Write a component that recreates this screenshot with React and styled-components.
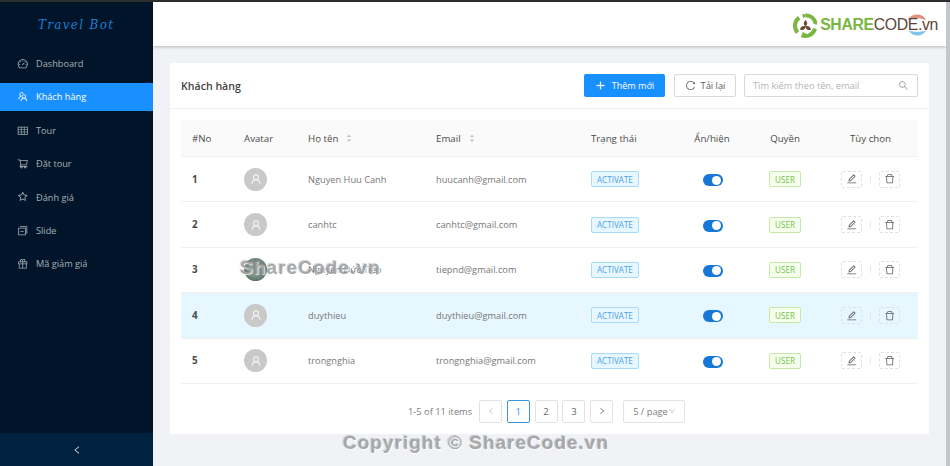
import React from "react";
import styled, { createGlobalStyle } from "styled-components";
import {
  AiOutlineDashboard, AiOutlineTeam, AiOutlineTable, AiOutlineShoppingCart, AiOutlineStar,
  AiOutlineSwitcher, AiOutlineGift, AiOutlinePlus, AiOutlineReload, AiOutlineSearch,
  AiOutlineEdit, AiOutlineDelete, AiOutlineLeft, AiOutlineRight, AiOutlineDown, AiOutlineUser,
  AiFillCaretUp, AiFillCaretDown,
} from "react-icons/ai";

const Global = createGlobalStyle`
  html, body { margin: 0; padding: 0; height: 100%; overflow: hidden; background: #f0f2f5; }
  body { font-family: "Open Sans", "Noto Sans", "Liberation Sans", sans-serif; font-size: 9.3px; color: #595959; }
  * { box-sizing: border-box; }
`;

const Shell = styled.div`
  position: relative;
  width: 950px;
  height: 466px;
  display: flex;
  flex-direction: column;
  overflow: hidden;
`;
const TopStrip = styled.div`height: 2px; background: #2e2e2e; flex: none;`;
const Body = styled.div`flex: 1; display: flex; min-height: 0;`;
const Sider = styled.aside`
  width: 153px;
  flex: none;
  background: #001529;
  display: flex;
  flex-direction: column;
`;
const Brand = styled.div`
  height: 45px;
  padding: 16px 0 0 38px;
  font-family: "DejaVu Serif", serif;
  font-style: italic;
  font-size: 12px;
  letter-spacing: 1.3px;
  color: #1f7fd1;
`;
const Menu = styled.nav`flex: 1; display: flex; flex-direction: column; padding-top: 2.5px;`;
const MenuItem = styled.div`
  height: 28px;
  margin-bottom: 5.4px;
  padding-left: 16.5px;
  display: flex;
  align-items: center;
  gap: 8px;
  font-size: 9.2px;
  color: ${p => (p.$active ? "#fff" : "rgba(255,255,255,.66)")};
  background: ${p => (p.$active ? "#1890ff" : "transparent")};
  svg { width: 11.5px; height: 11.5px; flex: none; }
`;
const Collapse = styled.div`
  height: 33px;
  background: #002140;
  color: #d5dbe1;
  display: flex;
  align-items: center;
  justify-content: center;
  svg { width: 10px; height: 10px; }
`;
const Main = styled.main`flex: 1; display: flex; flex-direction: column; min-width: 0; padding-right: 4px; position: relative;`;
const ScrollTrack = styled.div`width: 4px; background: #c4c6c9; position: absolute; right: 0; top: 0; bottom: 0;`;
const Header = styled.header`
  height: 44px;
  background: #fff;
  box-shadow: 0 1px 3px rgba(0,0,0,.25);
  display: flex;
  justify-content: flex-end;
  align-items: center;
  padding-right: 8px;
  flex: none;
`;
const Logo = styled.div`display: flex; align-items: center; gap: 1px; margin-top: 2px;`;
const LogoText = styled.div`
  font-family: "Liberation Sans", sans-serif;
  font-size: 15.8px;
  line-height: 20px;
  color: #5b4636;
  position: relative;
  letter-spacing: -.35px;
  b { color: #7ab642; font-weight: 700; }
`;
const LogoSplash = styled.svg`position: absolute; right: 9px; top: -4px; z-index: 0;`;
const LogoWord = styled.span`position: relative; z-index: 1;`;

const Card = styled.section`
  margin: 17px 17px 0 17px;
  height: 371px;
  background: #fff;
  display: flex;
  flex-direction: column;
`;
const CardHead = styled.div`
  height: 46px;
  padding: 0 11px;
  border-bottom: 1px solid #f0f0f0;
  display: flex;
  align-items: center;
`;
const CardTitle = styled.h2`
  margin: 0;
  flex: 1;
  font-size: 10.6px;
  font-weight: 600;
  color: #434343;
`;
const PrimaryBtn = styled.button`
  width: 81px; height: 23px;
  border: 0; border-radius: 2px;
  background: #1890ff;
  color: #fff;
  font: inherit; font-size: 9.1px;
  display: flex; align-items: center; justify-content: center; gap: 6px;
  padding: 0;
  svg { width: 11px; height: 11px; stroke: #fff; stroke-width: 30; }
`;
const GhostBtn = styled.button`
  width: 62px; height: 23px; margin-left: 9px;
  border: 1px solid #d9d9d9; border-radius: 2px;
  background: #fff;
  color: #595959;
  font: inherit; font-size: 9.3px;
  display: flex; align-items: center; justify-content: center; gap: 5px;
  padding: 0;
  svg { width: 11px; height: 11px; }
`;
const Search = styled.div`
  width: 174px; height: 23px; margin-left: 8px;
  border: 1px solid #d9d9d9; border-radius: 2px;
  display: flex; align-items: center; justify-content: space-between;
  padding: 0 8px;
  color: #b5b5b5; font-size: 9.25px;
  svg { width: 11px; height: 11px; color: #9a9a9a; }
`;
const TableWrap = styled.div`padding: 11px 11px 0;`;
const cols = "52px 64px 128px 155px 97px 70px 76px 95px";
const HeadRow = styled.div`
  display: grid;
  grid-template-columns: ${cols};
  height: 37px;
  background: #fafafa;
  border-bottom: 1px solid #f0f0f0;
  align-items: center;
  font-size: 9.7px;
  font-weight: 500;
  color: #4a4a4a;
`;
const Row = styled.div`
  display: grid;
  grid-template-columns: ${cols};
  height: 45.4px;
  align-items: center;
  border-bottom: 1px solid #f0f0f0;
  background: ${p => (p.$hl ? "#e6f7ff" : "#fff")};
  font-size: 9.25px;
  color: #777;
`;
const Cell = styled.div`
  padding: 0 11px;
  display: flex;
  align-items: center;
  gap: 7px;
  white-space: nowrap;
  justify-content: ${p => (p.$center ? "center" : "flex-start")};
`;
const NoCell = styled(Cell)`font-weight: 700; color: #4a4a4a; font-size: 9.8px;`;
const Sorter = styled.span`
  display: inline-flex; flex-direction: column; color: #bfbfbf;
  svg { width: 8px; height: 5.5px; display: block; }
`;
const Avatar = styled.div`
  width: 23px; height: 23px; border-radius: 50%;
  background: ${p => (p.$photo ? "radial-gradient(circle at 50% 45%, #8d9a90 0 35%, #5c7a6c 70%)" : "#c9c9c9")};
  color: #fff;
  display: flex; align-items: center; justify-content: center;
  svg { width: 12px; height: 12px; }
`;
const Tag = styled.span`
  height: 16px; padding: 0 5px;
  display: inline-flex; align-items: center;
  border: 1px solid ${p => p.$border};
  background: ${p => p.$bg};
  color: ${p => p.$color};
  border-radius: 2px;
  font-size: 8.1px;
`;
const Switch = styled.span`
  width: 20px; height: 12px; border-radius: 6px; background: #1677d9; margin: 2px 0 0 1px;
  display: inline-flex; align-items: center; justify-content: flex-end; padding-right: 1.5px;
  &::after { content: ""; width: 9px; height: 9px; border-radius: 50%; background: #fff; }
`;
const IconBtn = styled.span`
  width: 21px; height: 17px;
  border: 1px dashed #e0e0e0; border-radius: 2px;
  display: inline-flex; align-items: center; justify-content: center;
  color: #5f5f5f;
  svg { width: 11.5px; height: 11.5px; }
`;
const Divider = styled.span`width: 1px; height: 7px; background: #e6e6e6; margin: 0 8px;`;
const Actions = styled(Cell)`gap: 0; padding: 0 0 0 18px;`;
const Pager = styled.div`
  display: flex; align-items: center;
  margin-top: 16px;
  padding-left: 238px;
  font-size: 9.3px; color: #7d7d7d;
`;
const Total = styled.span`width: 71px; flex: none;`;
const PageBtn = styled.span`
  width: 23px; height: 23px; margin-right: 4.8px;
  border: 1px solid ${p => (p.$active ? "#3e95d8" : "#e2e2e2")};
  border-radius: 2px;
  color: ${p => (p.$active ? "#3e95d8" : p.$off ? "#c4c4c4" : "#666")};
  display: inline-flex; align-items: center; justify-content: center;
  font-size: 9.6px;
  svg { width: 8px; height: 8px; }
`;
const PageSize = styled.span`
  width: 62px; height: 23px; margin-left: 5.5px;
  border: 1px solid #e2e2e2; border-radius: 2px;
  display: inline-flex; align-items: center; justify-content: center; gap: 0;
  svg { width: 8px; height: 8px; color: #bdbdbd; }
`;
const Watermark = styled.div`
  position: absolute;
  font-family: "Liberation Sans", sans-serif;
  font-weight: 700;
  color: rgba(150,150,150,.78);
  text-shadow: 1px 1px 1px rgba(255,255,255,.8), -1px -1px 1px rgba(90,90,90,.3);
  white-space: nowrap;
  letter-spacing: ${p => p.$ls}px;
  left: ${p => p.$x}px;
  top: ${p => p.$y}px;
  font-size: ${p => p.$s}px;
`;

const items = [
  [AiOutlineDashboard, "Dashboard"], [AiOutlineTeam, "Khách hàng", true], [AiOutlineTable, "Tour"],
  [AiOutlineShoppingCart, "Đặt tour"], [AiOutlineStar, "Đánh giá"], [AiOutlineSwitcher, "Slide"], [AiOutlineGift, "Mã giảm giá"],
];
const rows = [
  ["1", "Nguyen Huu Canh", "huucanh@gmail.com"],
  ["2", "canhtc", "canhtc@gmail.com"],
  ["3", "Nguyễn Đức Tiệp", "tiepnd@gmail.com", "photo"],
  ["4", "duythieu", "duythieu@gmail.com", "hl"],
  ["5", "trongnghia", "trongnghia@gmail.com"],
];

const Sort = () => <Sorter><AiFillCaretUp /><AiFillCaretDown /></Sorter>;

const LogoMark = () => (
  <svg width="27" height="27" viewBox="0 0 34 34">
    <path d="M17 4a13 13 0 0 1 12.6 10" fill="none" stroke="#7ab642" strokeWidth="5" />
    <path d="M29 21a13 13 0 0 1-17 8.5" fill="none" stroke="#7ab642" strokeWidth="5" />
    <path d="M7 26A13 13 0 0 1 9 7" fill="none" stroke="#7ab642" strokeWidth="5" />
    <path d="M13 2l6 2-5 4zM32 16l-5-1 3-5zM14 31l-1-6 6 3z" fill="#7ab642" />
    <path d="M17 10c3 3 3 6 0 8-3-2-3-5 0-8zM10 22c1-4 4-5 7-4 0 4-3 6-7 4zM24 22c-4 2-7 0-7-4 3-1 6 0 7 4z" fill="#6b4a34" />
  </svg>
);

export default function App() {
  return (
    <Shell>
      <Global />
      <TopStrip />
      <Body>
        <Sider>
          <Brand>Travel Bot</Brand>
          <Menu>
            {items.map(([Icon, label, active]) => (
              <MenuItem key={label} $active={active}><Icon />{label}</MenuItem>
            ))}
          </Menu>
          <Collapse><AiOutlineLeft /></Collapse>
        </Sider>
        <Main>
          <ScrollTrack />
          <Header>
            <Logo>
              <LogoMark />
              <LogoText>
                <LogoSplash width="24" height="28" viewBox="0 0 26 28">
                  <path d="M3 9a11 11 0 0 1 20 0c-6-3-13-3-20 0z" fill="#d9755f" opacity=".8" />
                  <path d="M4 20a11 11 0 0 0 19 0c-6 2-13 2-19 0z" fill="#5fb6e6" opacity=".8" />
                </LogoSplash>
                <LogoWord><b>SHARE</b>CODE.vn</LogoWord>
              </LogoText>
            </Logo>
          </Header>
          <Card>
            <CardHead>
              <CardTitle>Khách hàng</CardTitle>
              <PrimaryBtn><AiOutlinePlus />Thêm mới</PrimaryBtn>
              <GhostBtn><AiOutlineReload />Tải lại</GhostBtn>
              <Search>Tìm kiếm theo tên, email<AiOutlineSearch /></Search>
            </CardHead>
            <TableWrap>
              <HeadRow>
                <Cell>#No</Cell>
                <Cell>Avatar</Cell>
                <Cell>Họ tên<Sort /></Cell>
                <Cell>Email<Sort /></Cell>
                <Cell>Trạng thái</Cell>
                <Cell $center>Ẩn/hiện</Cell>
                <Cell $center>Quyền</Cell>
                <Cell $center>Tùy chọn</Cell>
              </HeadRow>
              {rows.map(([no, name, email, flag]) => (
                <Row key={no} $hl={flag === "hl"}>
                  <NoCell>{no}</NoCell>
                  <Cell><Avatar $photo={flag === "photo"}>{flag !== "photo" && <AiOutlineUser />}</Avatar></Cell>
                  <Cell>{name}</Cell>
                  <Cell>{email}</Cell>
                  <Cell><Tag $border="#a6dcfa" $bg="#e6f7ff" $color="#4c9fe6">ACTIVATE</Tag></Cell>
                  <Cell $center><Switch /></Cell>
                  <Cell $center><Tag $border="#c3eba6" $bg="#f6ffed" $color="#73c248">USER</Tag></Cell>
                  <Actions><IconBtn><AiOutlineEdit /></IconBtn><Divider /><IconBtn><AiOutlineDelete /></IconBtn></Actions>
                </Row>
              ))}
            </TableWrap>
            <Pager>
              <Total>1-5 of 11 items</Total>
              <PageBtn $off><AiOutlineLeft /></PageBtn>
              <PageBtn $active>1</PageBtn>
              <PageBtn>2</PageBtn>
              <PageBtn>3</PageBtn>
              <PageBtn><AiOutlineRight /></PageBtn>
              <PageSize>5 / page<AiOutlineDown /></PageSize>
            </Pager>
          </Card>
        </Main>
      </Body>
      <Watermark $x={240} $y={257} $s={19} $ls={1.1}>ShareCode.vn</Watermark>
      <Watermark $x={343} $y={432} $s={19} $ls={1}>Copyright © ShareCode.vn</Watermark>
    </Shell>
  );
}
